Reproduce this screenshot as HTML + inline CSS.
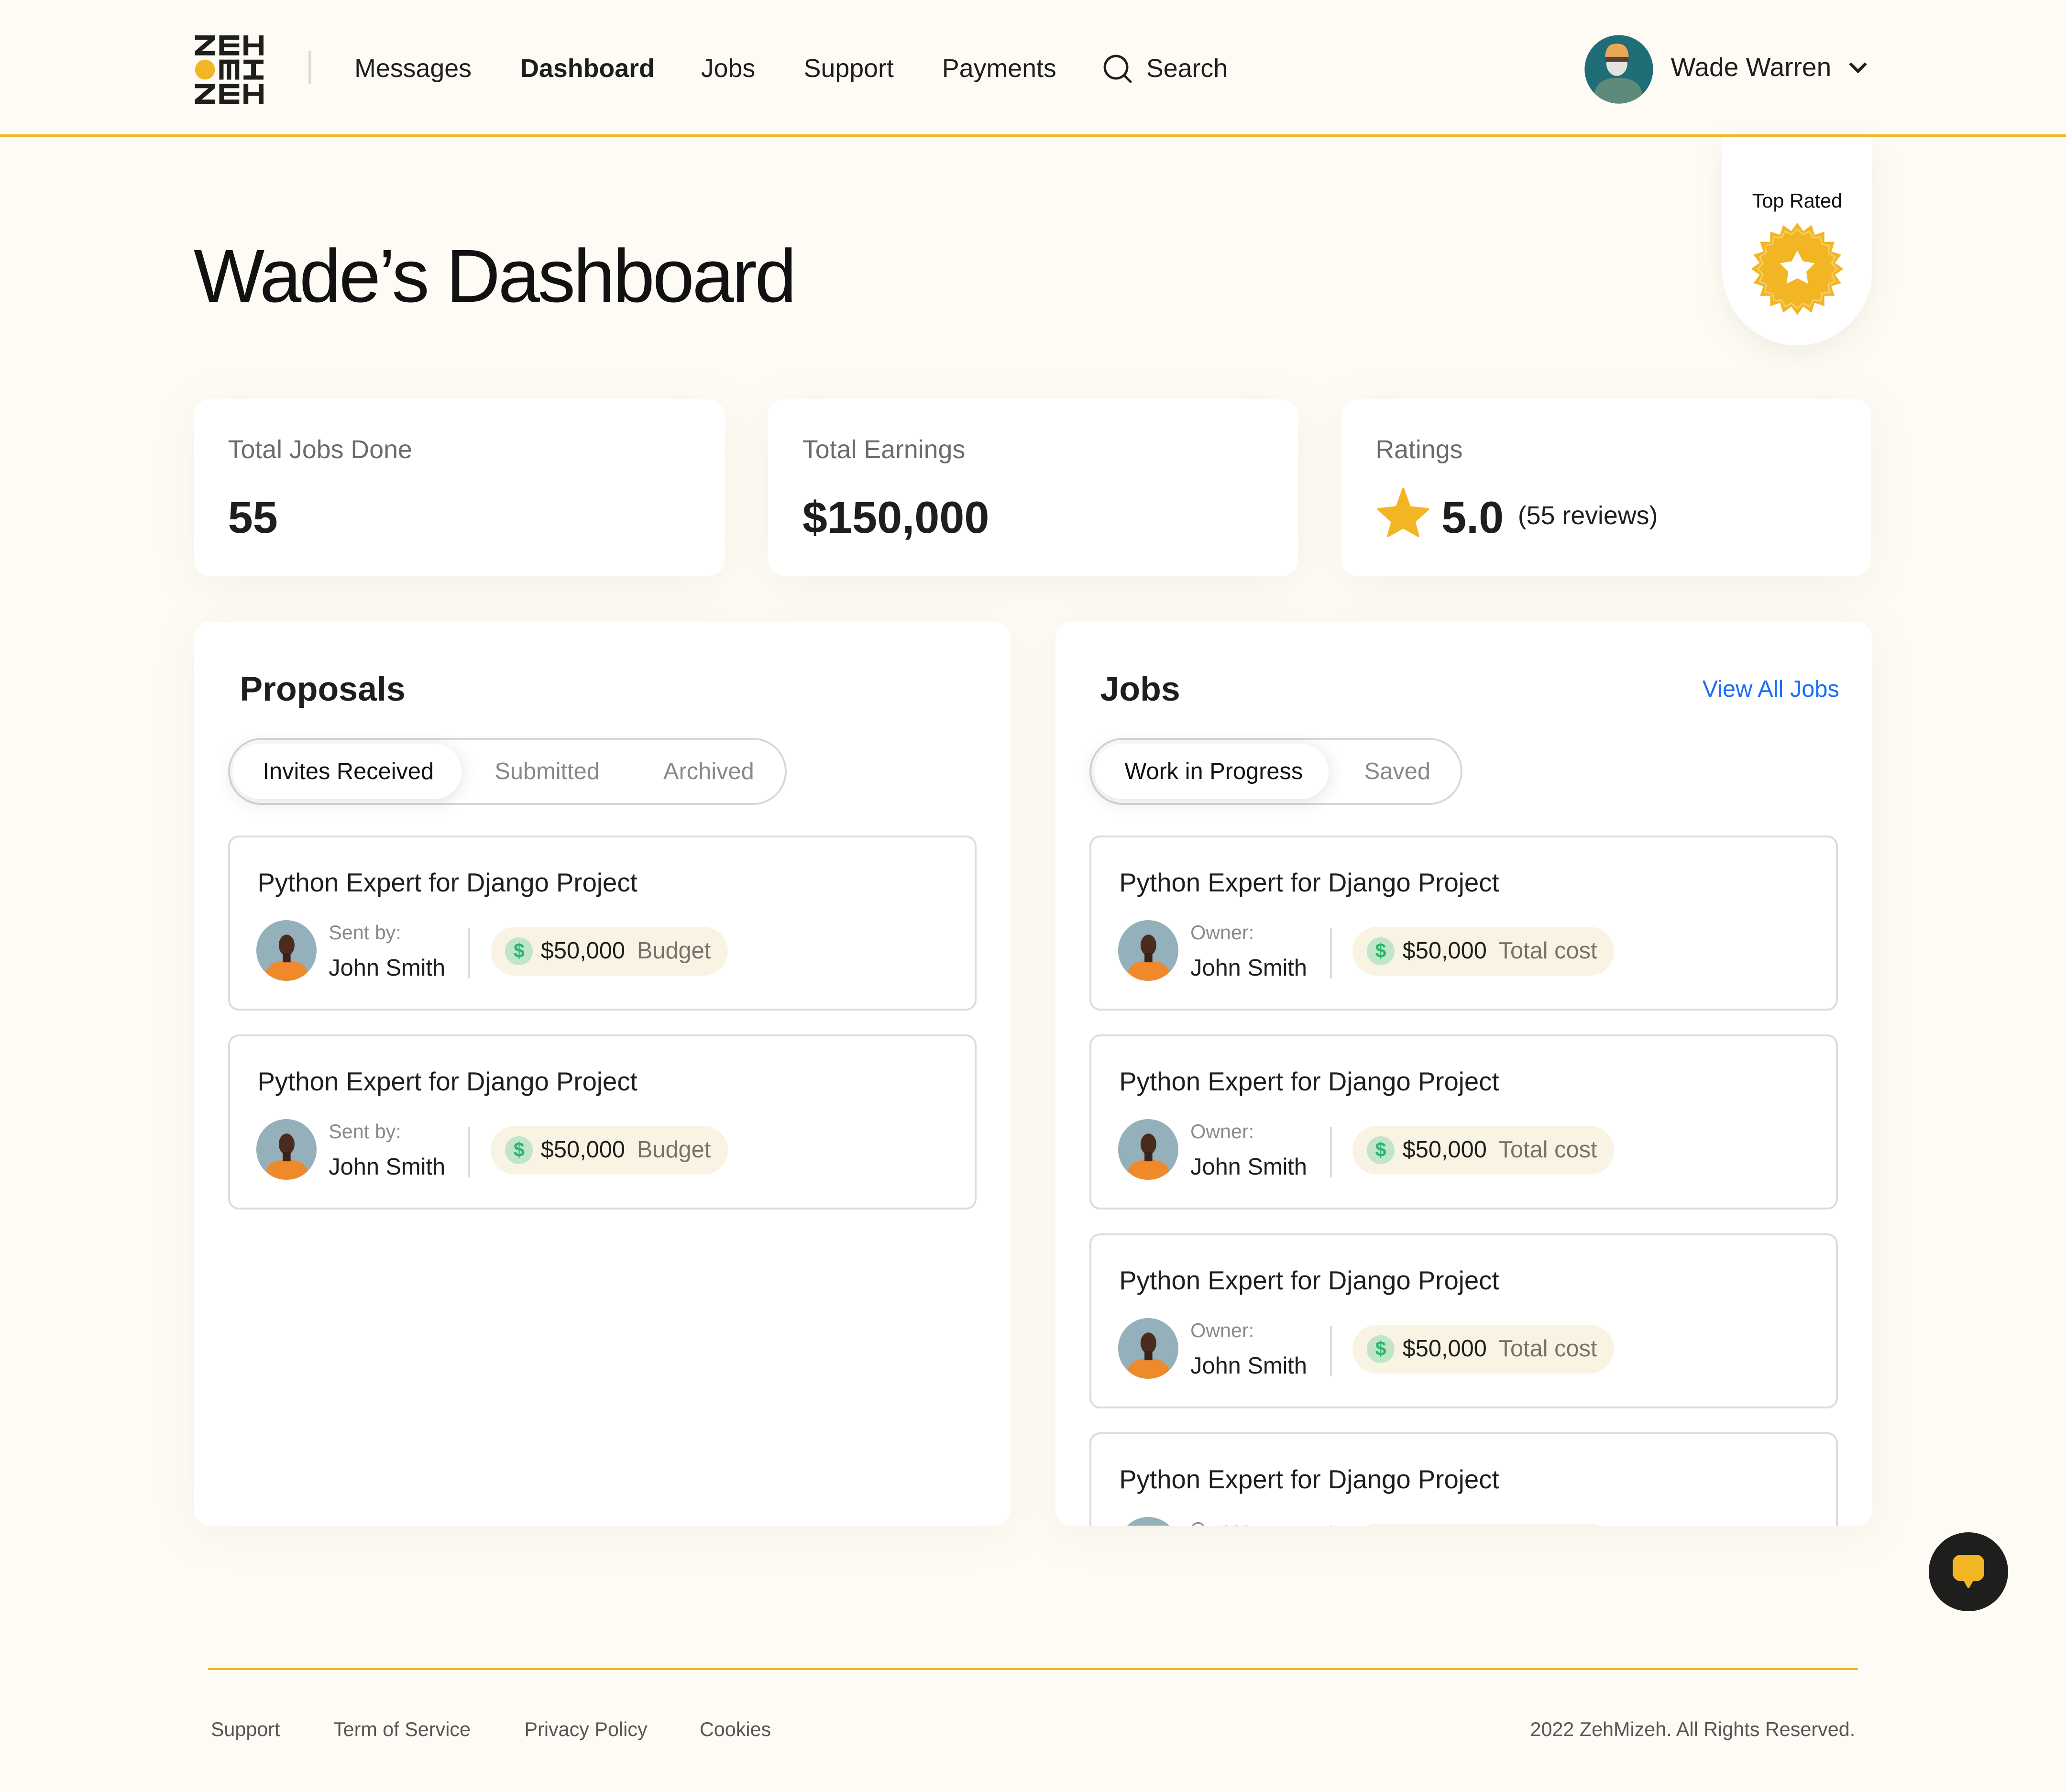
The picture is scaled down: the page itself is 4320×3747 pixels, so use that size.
<!DOCTYPE html>
<html><head><meta charset="utf-8">
<style>
*{margin:0;padding:0;box-sizing:border-box}
html,body{width:4320px;height:3747px;overflow:hidden;background:#fdfbf4}
#w{zoom:2.7551;width:1568px;height:1360px;position:relative;font-family:"Liberation Sans",Arial,sans-serif;color:#1e1e1c}
.a{position:absolute}
.nav{position:absolute;top:40px;font-size:19.5px;line-height:24px;color:#1e1e1c}
.card{position:absolute;background:#fff;border-radius:12px;box-shadow:0 6px 30px rgba(180,170,140,.12)}
.lbl{position:absolute;left:26px;top:27px;font-size:19.5px;color:#6b6b6b}
.val{position:absolute;left:26px;top:70px;font-size:34px;font-weight:bold;color:#1e1e1c}
.panel{position:absolute;top:472px;height:686px;background:#fff;border-radius:12px;overflow:hidden;box-shadow:0 6px 30px rgba(180,170,140,.12)}
.ptitle{position:absolute;top:36px;font-size:26px;font-weight:bold}
.tabs{position:absolute;top:88px;height:51px;border:1.5px solid #d8d8d8;border-radius:26px;background:#fff}
.tab{position:absolute;top:0;height:48px;line-height:48px;font-size:17.7px;color:#888}
.act{position:absolute;top:3px;left:2px;height:42px;border-radius:21px;background:#fff;box-shadow:0 2px 14px rgba(0,0,0,.12)}
.it{position:absolute;left:26px;width:568px;height:133px;border:1.5px solid #dcdcdc;border-radius:8px;background:#fff}
.it .t{position:absolute;left:21px;top:23px;font-size:19.8px;color:#1e1e1c}
.av{position:absolute;left:20px;top:63px;width:46px;height:46px;border-radius:50%;background:#93b0bb;overflow:hidden}
.it .s{position:absolute;left:75px;top:64px;font-size:15px;color:#8a8a8a}
.it .n{position:absolute;left:75px;top:89px;font-size:17.7px;color:#1e1e1c}
.it .d{position:absolute;left:181px;top:69px;width:1.5px;height:38px;background:#ddd}
.chip{position:absolute;left:198px;top:68px;height:37px;border-radius:19px;background:#f9f3e4;font-size:17.7px;line-height:37px;padding-left:38px;padding-right:13px;white-space:nowrap}
.chip i{position:absolute;left:11px;top:8px;width:21px;height:21px;border-radius:50%;background:#c0e5c9;color:#2bb56d;font-style:normal;font-size:15px;line-height:21px;text-align:center;font-weight:bold}
.chip span{color:#76726a;margin-left:9px}
.ft{position:absolute;top:1304px;font-size:15px;color:#555}
</style></head><body><div id="w">
<svg class="a" style="left:147px;top:27px" width="54" height="52" viewBox="0 0 144 144">
<g fill="#1e1e1c">
<path d="M0 0h42v9L14 33h28v9H0v-9L28 9H0z"/>
<path d="M51 0h42v9H61v8h32v8H61v8h32v9H51z"/>
<path d="M102 0h10v17h22V0h10v42h-10V25h-22v17h-10z"/>
<rect x="51" y="51" width="9" height="42"/><rect x="67" y="51" width="9" height="42"/><rect x="84" y="51" width="9" height="42"/><rect x="51" y="51" width="42" height="9"/>
<path d="M102 51h42v9h-16v24h16v9h-42v-9h16V60h-16z"/>
<path d="M0 102h42v9L14 135h28v9H0v-9L28 111H0z"/>
<path d="M51 102h42v9H61v8h32v8H61v8h32v9H51z"/>
<path d="M102 102h10v17h22v-17h10v42h-10v-17h-22v17h-10z"/>
</g><circle cx="21" cy="72" r="21" fill="#f2b625"/></svg>
<div class="a" style="left:234px;top:39px;width:2px;height:25px;background:#dcdcdc"></div>
<div class="nav" style="left:269px">Messages</div>
<div class="nav" style="left:395px;font-weight:bold">Dashboard</div>
<div class="nav" style="left:532px">Jobs</div>
<div class="nav" style="left:610px">Support</div>
<div class="nav" style="left:715px">Payments</div>
<svg class="a" style="left:837px;top:41px" width="23" height="23" viewBox="0 0 23 23"><circle cx="10" cy="10" r="8.5" fill="none" stroke="#1e1e1c" stroke-width="1.8"/><path d="M16 16l5 5" stroke="#1e1e1c" stroke-width="1.8" stroke-linecap="round"/></svg>
<div class="nav" style="left:870px">Search</div>
<svg class="a" style="left:1202px;top:26px" width="53" height="53" viewBox="0 0 53 53"><defs><clipPath id="cc"><circle cx="26.5" cy="26.5" r="26"/></clipPath></defs><circle cx="26.5" cy="26.5" r="26" fill="#1f6d76"/><g clip-path="url(#cc)"><path d="M7 53c0-14 5-20 19-20s19 6 19 20z" fill="#5e8a7a"/><ellipse cx="25" cy="22" rx="8" ry="9.5" fill="#e4e2de"/><path d="M16 19c0-9 3-12 9-12s9 3 9 12z" fill="#eaa757"/><rect x="16" y="17" width="18" height="4" fill="#5a4038"/></g></svg>
<div class="nav" style="left:1268px;top:39px;font-size:20px">Wade Warren</div>
<svg class="a" style="left:1402px;top:46px" width="16" height="12" viewBox="0 0 16 12"><path d="M2 2l6 6 6-6" fill="none" stroke="#1e1e1c" stroke-width="2.2"/></svg>
<div class="a" style="left:0;top:102px;width:1568px;height:2px;background:#f2b625"></div>
<div class="a" style="left:1307px;top:104px;width:114px;height:158px;background:#fff;border-radius:0 0 57px 57px;box-shadow:0 8px 20px rgba(180,170,140,.15)"></div>
<div class="a" style="left:1307px;top:144px;width:114px;text-align:center;font-size:15px;color:#111">Top Rated</div>
<svg class="a" style="left:1328px;top:168px" width="72" height="72" viewBox="-36 -36 72 72"><polygon id="sb" fill="#f2b625"/><polygon id="sb2" fill="none" stroke="#f7d27a" stroke-width="0.9"/><polygon fill="#fff" points="0,-14 4.2,-5.8 13.3,-4.3 6.8,2.2 8.2,11.3 0,7.2 -8.2,11.3 -6.8,2.2 -13.3,-4.3 -4.2,-5.8"/></svg>
<script>
(function(){function p(n,r1,r2){var s=[];for(var i=0;i<2*n;i++){var a=Math.PI*i/n-Math.PI/2,r=i%2?r2:r1;s.push((r*Math.cos(a)).toFixed(2)+','+(r*Math.sin(a)).toFixed(2));}return s.join(' ');}
document.getElementById('sb').setAttribute('points',p(20,35,29));document.getElementById('sb2').setAttribute('points',p(20,30,26.5));})();
</script>
<div class="a" style="left:147px;top:177px;font-size:57px;letter-spacing:-1.6px;color:#111">Wade’s Dashboard</div>
<div class="card" style="left:147px;top:303px;width:403px;height:134px"><div class="lbl">Total Jobs Done</div><div class="val">55</div></div>
<div class="card" style="left:583px;top:303px;width:402px;height:134px"><div class="lbl">Total Earnings</div><div class="val">$150,000</div></div>
<div class="card" style="left:1018px;top:303px;width:402px;height:134px"><div class="lbl">Ratings</div>
<svg class="a" style="left:27px;top:67px" width="40" height="38" viewBox="0 0 40 38"><polygon points="20,1 25,15 39,16.5 28.5,26 31.5,37 20,30.5 8.5,37 11.5,26 1,16.5 15,15" fill="#f2b625" stroke="#f2b625" stroke-width="1.5" stroke-linejoin="round"/></svg>
<div class="val" style="left:76px">5.0</div><div class="a" style="left:134px;top:77px;font-size:19.5px">(55 reviews)</div></div>
<div class="panel" style="left:147px;width:620px">
<div class="ptitle" style="left:35px">Proposals</div>
<div class="tabs" style="left:26px;width:424px"><div class="act" style="width:174px"></div>
<div class="tab" style="left:25px;color:#111">Invites Received</div><div class="tab" style="left:201px">Submitted</div><div class="tab" style="left:329px">Archived</div></div>
<div class="it" style="top:162px"><div class="t">Python Expert for Django Project</div>
<div class="av"><svg width="46" height="46" viewBox="0 0 46 46"><path d="M6 46c1-12 6-15 17-15s16 3 17 15z" fill="#f0892a"/><ellipse cx="23" cy="19" rx="6" ry="8" fill="#4a2b1e"/><rect x="20" y="25" width="6" height="7" fill="#3a2218"/></svg></div>
<div class="s">Sent by:</div><div class="n">John Smith</div><div class="d"></div>
<div class="chip"><i>$</i>$50,000<span>Budget</span></div></div>
<div class="it" style="top:313px"><div class="t">Python Expert for Django Project</div>
<div class="av"><svg width="46" height="46" viewBox="0 0 46 46"><path d="M6 46c1-12 6-15 17-15s16 3 17 15z" fill="#f0892a"/><ellipse cx="23" cy="19" rx="6" ry="8" fill="#4a2b1e"/><rect x="20" y="25" width="6" height="7" fill="#3a2218"/></svg></div>
<div class="s">Sent by:</div><div class="n">John Smith</div><div class="d"></div>
<div class="chip"><i>$</i>$50,000<span>Budget</span></div></div>
</div>
<div class="panel" style="left:801px;width:620px">
<div class="ptitle" style="left:34px">Jobs</div>
<div class="a" style="left:491px;top:41px;font-size:17.7px;color:#1a6ef5">View All Jobs</div>
<div class="tabs" style="left:26px;width:283px"><div class="act" style="width:178px"></div>
<div class="tab" style="left:25px;color:#111">Work in Progress</div><div class="tab" style="left:207px">Saved</div></div>
<div class="it" style="top:162px"><div class="t">Python Expert for Django Project</div>
<div class="av"><svg width="46" height="46" viewBox="0 0 46 46"><path d="M6 46c1-12 6-15 17-15s16 3 17 15z" fill="#f0892a"/><ellipse cx="23" cy="19" rx="6" ry="8" fill="#4a2b1e"/><rect x="20" y="25" width="6" height="7" fill="#3a2218"/></svg></div>
<div class="s">Owner:</div><div class="n">John Smith</div><div class="d"></div>
<div class="chip"><i>$</i>$50,000<span>Total cost</span></div></div>
<div class="it" style="top:313px"><div class="t">Python Expert for Django Project</div>
<div class="av"><svg width="46" height="46" viewBox="0 0 46 46"><path d="M6 46c1-12 6-15 17-15s16 3 17 15z" fill="#f0892a"/><ellipse cx="23" cy="19" rx="6" ry="8" fill="#4a2b1e"/><rect x="20" y="25" width="6" height="7" fill="#3a2218"/></svg></div>
<div class="s">Owner:</div><div class="n">John Smith</div><div class="d"></div>
<div class="chip"><i>$</i>$50,000<span>Total cost</span></div></div>
<div class="it" style="top:464px"><div class="t">Python Expert for Django Project</div>
<div class="av"><svg width="46" height="46" viewBox="0 0 46 46"><path d="M6 46c1-12 6-15 17-15s16 3 17 15z" fill="#f0892a"/><ellipse cx="23" cy="19" rx="6" ry="8" fill="#4a2b1e"/><rect x="20" y="25" width="6" height="7" fill="#3a2218"/></svg></div>
<div class="s">Owner:</div><div class="n">John Smith</div><div class="d"></div>
<div class="chip"><i>$</i>$50,000<span>Total cost</span></div></div>
<div class="it" style="top:615px"><div class="t">Python Expert for Django Project</div>
<div class="av"><svg width="46" height="46" viewBox="0 0 46 46"><path d="M6 46c1-12 6-15 17-15s16 3 17 15z" fill="#f0892a"/><ellipse cx="23" cy="19" rx="6" ry="8" fill="#4a2b1e"/><rect x="20" y="25" width="6" height="7" fill="#3a2218"/></svg></div>
<div class="s">Owner:</div><div class="n">John Smith</div><div class="d"></div>
<div class="chip"><i>$</i>$50,000<span>Total cost</span></div></div>
</div>
<div class="a" style="left:1464px;top:1163px;width:60px;height:60px;border-radius:50%;background:#1e1e1c"></div>
<svg class="a" style="left:1482px;top:1180px" width="24" height="26" viewBox="0 0 24 26"><rect x="0" y="0" width="24" height="20" rx="6" fill="#f2b625"/><path d="M8 19h8l-3 5.5q-1 1.5-2 0z" fill="#f2b625"/></svg>
<div class="a" style="left:158px;top:1266px;width:1252px;height:1.5px;background:#f2b625"></div>
<div class="ft" style="left:160px">Support</div>
<div class="ft" style="left:253px">Term of Service</div>
<div class="ft" style="left:398px">Privacy Policy</div>
<div class="ft" style="left:531px">Cookies</div>
<div class="ft" style="right:160px">2022 ZehMizeh. All Rights Reserved.</div>
</div></body></html>
